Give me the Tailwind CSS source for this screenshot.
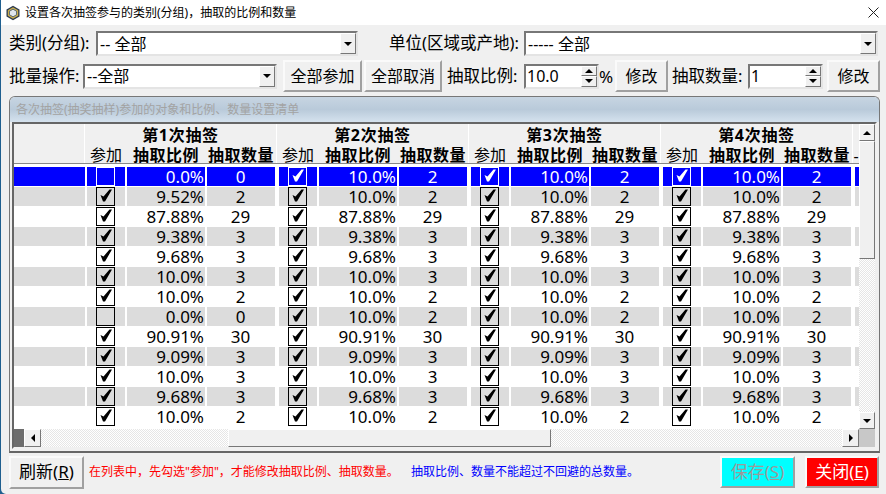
<!DOCTYPE html>
<html lang="zh">
<head>
    <meta charset="UTF-8">
    <title>设置各次抽签参与的类别(分组)</title>
    <script src="https://cdn.jsdelivr.net/npm/@tailwindcss/browser@4"></script>
</head>
<body class="m-0 overflow-hidden bg-[#1f5f8f]">
    <div class="w-[886px] h-[494px] pl-px font-['Noto_Sans','Noto_Sans_CJK_SC',sans-serif] text-black">
        <div class="h-full bg-[#f0f0f0] rounded-bl-[5px] flex flex-col overflow-hidden">

            <!-- Title bar -->
            <div class="h-[25px] bg-white flex items-center shrink-0 pl-[4px] pr-[7px]">
                <svg width="16" height="16" viewBox="0 0 16 16">
                    <path d="M8 .8 14.5 4.400v7.200L8 15.200 1.500 11.600V4.400z" fill="#2c3a4e"/>
                    <path d="M8 2.300 13.200 5.200v5.600L8 13.700 2.800 10.800V5.200z" fill="#c8ad4e"/>
                    <path d="M8 4.200 11.500 6.200v3.600L8 11.800 4.500 9.800V6.200z" fill="#dfe6ee" stroke="#41566f" stroke-width=".8"/>
                </svg>
                <span class="ml-[4px] text-[12px] leading-none">设置各次抽签参与的类别(分组)，抽取的比例和数量</span>
                <svg class="ml-auto" width="11" height="11" viewBox="0 0 11 11"><path d="M.5 .5l10 10M10.5 .5l-10 10" stroke="#222" fill="none"/></svg>
            </div>

            <!-- Filter row -->
            <div class="flex items-center h-[25px] mt-[6px] pl-[8px] text-[16px] leading-none shrink-0">
                <span class="w-[87px] text-[16.5px] whitespace-nowrap">类别(分组):</span>
                <div class="w-[262px] h-[25px] flex bg-white border-2 border-t-[#777] border-l-[#777] border-r-[#e4e4e4] border-b-[#e4e4e4]">
                    <span class="flex-1 pl-[2px] self-center">-- 全部</span>
                    <div class="w-[16px] flex items-center justify-center bg-[#f0f0f0] border border-t-white border-l-white border-r-[#777] border-b-[#777]">
                        <div class="border-x-[4px] border-x-transparent border-t-[4px] border-t-black"></div>
                    </div>
                </div>
                <span class="ml-[31px] w-[135px] text-[16.5px] whitespace-nowrap">单位(区域或产地):</span>
                <div class="w-[354px] h-[25px] flex bg-white border-2 border-t-[#777] border-l-[#777] border-r-[#e4e4e4] border-b-[#e4e4e4]">
                    <span class="flex-1 pl-[2px] self-center">----- 全部</span>
                    <div class="w-[16px] flex items-center justify-center bg-[#f0f0f0] border border-t-white border-l-white border-r-[#777] border-b-[#777]">
                        <div class="border-x-[4px] border-x-transparent border-t-[4px] border-t-black"></div>
                    </div>
                </div>
            </div>

            <!-- Batch row -->
            <div class="flex items-center h-[32px] mt-[4px] pl-[8px] text-[16px] leading-none shrink-0">
                <span class="w-[74px] text-[16.5px] whitespace-nowrap">批量操作:</span>
                <div class="w-[194px] h-[25px] flex bg-white border-2 border-t-[#777] border-l-[#777] border-r-[#e4e4e4] border-b-[#e4e4e4]">
                    <span class="flex-1 pl-[2px] self-center">--全部</span>
                    <div class="w-[16px] flex items-center justify-center bg-[#f0f0f0] border border-t-white border-l-white border-r-[#777] border-b-[#777]">
                        <div class="border-x-[4px] border-x-transparent border-t-[4px] border-t-black"></div>
                    </div>
                </div>
                <button class="ml-[6px] w-[79px] h-[32px] bg-[#f0f0f0] border-2 border-t-[#fafafa] border-l-[#fafafa] border-r-[#a0a0a0] border-b-[#a0a0a0]">全部参加</button>
                <button class="ml-[2px] w-[78px] h-[32px] bg-[#f0f0f0] border-2 border-t-[#fafafa] border-l-[#fafafa] border-r-[#a0a0a0] border-b-[#a0a0a0]">全部取消</button>
                <span class="ml-[5px] w-[77px] text-[16.5px] whitespace-nowrap">抽取比例:</span>
                <div class="w-[75px] h-[25px] flex bg-white border-2 border-t-[#777] border-l-[#777] border-r-[#e4e4e4] border-b-[#e4e4e4]">
                    <span class="flex-1 pl-[1px] self-center">10.0</span>
                    <div class="w-[16px] flex flex-col">
                        <div class="flex-1 flex items-center justify-center bg-[#f0f0f0] border border-t-white border-l-white border-r-[#777] border-b-[#777]"><div class="border-x-[4px] border-x-transparent border-b-[4px] border-b-black"></div></div>
                        <div class="flex-1 flex items-center justify-center bg-[#f0f0f0] border border-t-white border-l-white border-r-[#777] border-b-[#777]"><div class="border-x-[4px] border-x-transparent border-t-[4px] border-t-black"></div></div>
                    </div>
                </div>
                <span class="w-[16px] text-[17px]">%</span>
                <button class="w-[53px] h-[32px] bg-[#f0f0f0] border-2 border-t-[#fafafa] border-l-[#fafafa] border-r-[#a0a0a0] border-b-[#a0a0a0]">修改</button>
                <span class="ml-[4px] w-[76px] text-[16.5px] whitespace-nowrap">抽取数量:</span>
                <div class="w-[75px] h-[25px] flex bg-white border-2 border-t-[#777] border-l-[#777] border-r-[#e4e4e4] border-b-[#e4e4e4]">
                    <span class="flex-1 pl-[1px] self-center">1</span>
                    <div class="w-[16px] flex flex-col">
                        <div class="flex-1 flex items-center justify-center bg-[#f0f0f0] border border-t-white border-l-white border-r-[#777] border-b-[#777]"><div class="border-x-[4px] border-x-transparent border-b-[4px] border-b-black"></div></div>
                        <div class="flex-1 flex items-center justify-center bg-[#f0f0f0] border border-t-white border-l-white border-r-[#777] border-b-[#777]"><div class="border-x-[4px] border-x-transparent border-t-[4px] border-t-black"></div></div>
                    </div>
                </div>
                <button class="ml-[4px] w-[53px] h-[32px] bg-[#f0f0f0] border-2 border-t-[#fafafa] border-l-[#fafafa] border-r-[#a0a0a0] border-b-[#a0a0a0]">修改</button>
            </div>

            <!-- List panel -->
            <div class="ml-[8px] mt-[4px] w-[871px] h-[357px] shrink-0 flex flex-col border border-[#777] rounded-t-[6px] border-b-2 border-b-[#666] overflow-hidden">
                <div class="h-[25px] shrink-0 flex items-center pl-[6px] text-[12px] text-[#a3a3a3] bg-gradient-to-b from-[#c7d5e2] via-[#b9cada] to-[#d5e2ee]">各次抽签(抽奖抽样)参加的对象和比例、数量设置清单</div>
                <div class="flex-1 mx-[2px] mb-[2px] border-2 border-[#666] border-r-[#f0f0f0] border-b-[#f0f0f0] bg-white relative overflow-hidden flex">
                    <div class="w-[845px] shrink-0 flex flex-col overflow-hidden">
                        <div class="h-[40px] shrink-0 flex bg-[#f0f0f0] border-b border-[#888] text-[16px] leading-none" id="head"></div>
                        <div class="h-[3px] shrink-0"></div>
                        <div class="flex-1 overflow-hidden text-[17px] leading-none" id="rows"></div>
                        <!-- Horizontal scrollbar -->
                        <div class="h-[18px] shrink-0 flex bg-[#f0f0f0]">
                            <div class="w-[10px] bg-[#6d6d6d]"></div>
                            <div class="w-[17px] flex items-center justify-center border border-t-white border-l-white border-r-[#777] border-b-[#777]"><div class="border-y-[4px] border-y-transparent border-r-[4px] border-r-black"></div></div>
                            <div class="w-[187px] bg-[repeating-conic-gradient(#ffffff_0_25%,#e6e6e6_0_50%)] bg-[length:2px_2px]"></div>
                            <div class="w-[323px] bg-[#f0f0f0] border border-t-white border-l-white border-r-[#777] border-b-[#777]"></div>
                            <div class="flex-1 bg-[repeating-conic-gradient(#ffffff_0_25%,#e6e6e6_0_50%)] bg-[length:2px_2px]"></div>
                            <div class="w-[17px] flex items-center justify-center border border-t-white border-l-white border-r-[#777] border-b-[#777]"><div class="border-y-[4px] border-y-transparent border-l-[4px] border-l-black"></div></div>
                        </div>
                    </div>
                    <!-- Vertical scrollbar -->
                    <div class="flex-1 flex flex-col bg-[repeating-conic-gradient(#ffffff_0_25%,#e6e6e6_0_50%)] bg-[length:2px_2px]">
                        <div class="h-[17px] shrink-0 flex items-center justify-center bg-[#f0f0f0] border border-t-white border-l-white border-r-[#777] border-b-[#777]"><div class="border-x-[4px] border-x-transparent border-b-[4px] border-b-black"></div></div>
                        <div class="h-[118px] shrink-0 bg-[#f0f0f0] border border-t-white border-l-white border-r-[#777] border-b-[#777]"></div>
                        <div class="flex-1"></div>
                        <div class="h-[17px] shrink-0 flex items-center justify-center bg-[#f0f0f0] border border-t-white border-l-white border-r-[#777] border-b-[#777]"><div class="border-x-[4px] border-x-transparent border-t-[4px] border-t-black"></div></div>
                        <div class="h-[18px] shrink-0 bg-[#c8c8c8]"></div>
                    </div>
                </div>
            </div>

            <!-- Footer -->
            <div class="flex items-center mt-[2px] pl-[8px] h-[34px] shrink-0">
                <button class="w-[75px] h-[33px] text-[17px] bg-[#f0f0f0] border-2 border-t-[#fafafa] border-l-[#fafafa] border-r-[#a0a0a0] border-b-[#a0a0a0]">刷新(<span class="underline">R</span>)</button>
                <span class="ml-[5px] w-[322px] text-[12px] text-[#ff0000] whitespace-nowrap">在列表中，先勾选"参加"，才能修改抽取比例、抽取数量。</span>
                <span class="w-[309px] text-[12px] text-[#0000ff] whitespace-nowrap">抽取比例、数量不能超过不回避的总数量。</span>
                <button class="w-[75px] h-[32px] text-[17px] text-[#9a9a9a] bg-[#00ffff] border-2 border-t-[#fafafa] border-l-[#fafafa] border-r-[#a0a0a0] border-b-[#a0a0a0]">保存(<span class="underline">S</span>)</button>
                <button class="ml-[10px] w-[74px] h-[32px] text-[17px] text-white bg-[#ff0000] border-2 border-t-[#fafafa] border-l-[#fafafa] border-r-[#a0a0a0] border-b-[#a0a0a0]">关闭(<span class="underline">E</span>)</button>
            </div>
        </div>
    </div>

    <script>
        const data = [
            ['0.0%', 0, false], ['9.52%', 2, true], ['87.88%', 29, true], ['9.38%', 3, true], ['9.68%', 3, true],
            ['10.0%', 3, true], ['10.0%', 2, true], ['0.0%', 0, false], ['90.91%', 30, true], ['9.09%', 3, true],
            ['10.0%', 3, true], ['9.68%', 3, true], ['10.0%', 2, true]
        ];
        const tick = '<svg width="17" height="17" viewBox="0 0 17 17" class="block"><path d="M3.5 7 6.500 8.500 12.500 1.500 15 1.500 8 13.500 6 13.500z" fill="currentColor"/></svg>';

        // group header
        let head = '<div class="w-[71px] shrink-0 border-r border-white"></div>';
        for (let g = 1; g <= 4; g++) {
            head += `<div class="w-[192px] shrink-0 border-r border-white flex flex-col">
                <div class="h-[22px] flex items-center justify-center font-bold tracking-[0.7px]">第${g}次抽签</div>
                <div class="h-[17px] flex items-center">
                    <span class="w-[41px] pl-px text-center">参加</span>
                    <span class="w-[80px] text-center font-bold tracking-[0.5px]">抽取比例</span>
                    <span class="w-[70px] text-center font-bold tracking-[0.5px]">抽取数量</span>
                </div>
            </div>`;
        }
        head += '<div class="flex-1 text-center pt-[24px]">-</div>';
        document.getElementById('head').innerHTML = head;

        // rows: first row selected, every second row grey
        let rows = '';
        data.forEach((d, i) => {
            const sel = i === 0;
            const bg = sel ? 'bg-[#0000ff] text-white' : (i % 2 === 1 ? 'bg-[#dcdcdc]' : 'bg-white');
            let row = `<div class="w-[71px] shrink-0 h-[19px] ${bg}"></div>`;
            for (let g = 0; g < 4; g++) {
                const on = g > 0 ? true : d[2];
                const useDefault = g > 0 && (i === 0 || i === 1 || i === 7);
                const ratio = useDefault ? '10.0%' : d[0];
                const count = useDefault ? 2 : d[1];
                row += `<div class="w-[192px] shrink-0 flex gap-[2px] pl-[2px]">
                    <div class="w-[38px] h-[19px] pl-[9px] ${bg}">
                        <div class="w-[19px] h-[19px] border ${sel ? 'border-white' : 'border-black'}">${on ? tick : ''}</div>
                    </div>
                    <div class="w-[78px] h-[19px] pr-px flex items-center justify-end ${bg}">${ratio}</div>
                    <div class="w-[68px] h-[19px] pr-px flex items-center justify-center ${bg}">${count}</div>
                </div>`;
            }
            row += `<div class="ml-[2px] flex-1 h-[19px] ${bg}"></div>`;
            rows += `<div class="flex h-[20px]">${row}</div>`;
        });
        document.getElementById('rows').innerHTML = rows;
    </script>
</body>
</html>
